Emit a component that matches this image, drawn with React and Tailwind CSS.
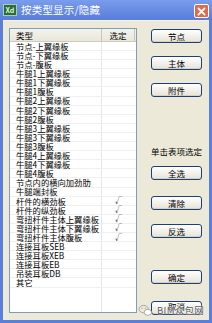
import React from 'react';

const items = [
  { name: '节点-上翼缘板' },
  { name: '节点-下翼缘板' },
  { name: '节点-腹板' },
  { name: '牛腿1上翼缘板' },
  { name: '牛腿1下翼缘板' },
  { name: '牛腿1腹板' },
  { name: '牛腿2上翼缘板' },
  { name: '牛腿2下翼缘板' },
  { name: '牛腿2腹板' },
  { name: '牛腿3上翼缘板' },
  { name: '牛腿3下翼缘板' },
  { name: '牛腿3腹板' },
  { name: '牛腿4上翼缘板' },
  { name: '牛腿4下翼缘板' },
  { name: '牛腿4腹板' },
  { name: '节点内的横向加劲肋' },
  { name: '牛腿端封板' },
  { name: '杆件的横劲板', checked: true },
  { name: '杆件的纵劲板', checked: true },
  { name: '弯扭杆件主体上翼缘板', checked: true },
  { name: '弯扭杆件主体下翼缘板', checked: true },
  { name: '弯扭杆件主体腹板', checked: true },
  { name: '连接耳板SEB' },
  { name: '连接耳板XEB' },
  { name: '连接耳板EB' },
  { name: '吊装耳板DB' },
  { name: '其它' },
];

const font = { fontFamily: '"Noto Sans CJK SC", "Liberation Sans", sans-serif' };

const XpButton = ({ label, className = '', textClass = '' }) => (
  <div
    className={`w-[51px] h-[14px] rounded-[3px] border border-[#1c3f78] bg-gradient-to-b from-white to-[#e6e3d6] shadow-[inset_0_-1px_0_#d8d2bd] flex items-center justify-center text-[8.5px] leading-none text-black ${className}`}
  >
    <span className={textClass}>{label}</span>
  </div>
);

const App = () => {
  return (
    <div className="relative w-[212px] h-[323px] bg-[#5a7edb] flex flex-col overflow-hidden" style={font}>
      {/* Title bar */}
      <div className="h-[20px] flex items-center px-[3px] bg-gradient-to-b from-[#7a9cec] to-[#587ddb]">
        <div className="w-[14px] h-[12px] bg-[#2f6a3a] border border-[#9fd3a8] flex items-center justify-center text-[7px] leading-none font-bold text-[#d8f5d8]">
          Xd
        </div>
        <span className="ml-[4px] text-[10.5px] leading-none text-white tracking-[0.2px]">按类型显示/隐藏</span>
        <div className="ml-auto mt-[2px] w-[15px] h-[14px] rounded-[2px] border border-white bg-[#e2694a] flex items-center justify-center">
          <svg width="9" height="9" viewBox="0 0 9 9">
            <path d="M1.5 1.5 L7.5 7.5 M7.5 1.5 L1.5 7.5" stroke="white" strokeWidth="1.8" strokeLinecap="round" />
          </svg>
        </div>
      </div>

      {/* Body */}
      <div className="flex-1 mx-[3px] mb-[3px] bg-[#ece9d8] border-t border-[#f5f4ee] flex pl-[6px] pt-[7px]">
        {/* List */}
        <div className="w-[128px] h-[285px] border border-[#7f9db9] bg-white flex flex-col">
          <div className="h-[13px] flex bg-gradient-to-b from-[#f4f3ec] to-[#e9e7dc] border-b border-[#d0ccbc] text-[8.5px] leading-none text-black">
            <div className="w-[92px] flex items-center pl-[6px] border-r border-[#c9c5b5]">类型</div>
            <div className="w-[33px] flex items-center justify-center border-r border-[#c9c5b5]">选定</div>
          </div>
          <div className="flex-1 flex flex-col">
            {items.map((it, i) => (
              <div key={i} className="h-[9.1px] flex border-b border-[#f0f0f0] text-[8.3px] leading-none text-black">
                <div className="w-[92px] flex items-center pl-[6px] border-r border-[#e6e6e6] whitespace-nowrap">{it.name}</div>
                <div className="w-[33px] flex items-center justify-center text-[7px]">{it.checked ? '√' : ''}</div>
              </div>
            ))}
            <div className="flex-1 flex">
              <div className="w-[92px] border-r border-[#e6e6e6]" />
            </div>
          </div>
        </div>

        {/* Buttons */}
        <div className="ml-[14px] flex flex-col items-center w-[51px] pt-[1px]">
          <XpButton label="节点" />
          <XpButton label="主体" className="mt-[13px]" />
          <XpButton label="附件" className="mt-[13px]" />
          <div className="mt-[49px] h-[10px] flex items-center text-[8.5px] leading-none whitespace-nowrap text-black">单击表项选定</div>
          <XpButton label="全选" className="mt-[10px]" />
          <XpButton label="清除" className="mt-[16px]" />
          <XpButton label="反选" className="mt-[14px]" />
          <XpButton label="确定" className="mt-[32px]" />
          <XpButton label="取消" className="mt-[17px]" textClass="-mt-[4px]" />
        </div>
      </div>

      {/* Watermark */}
      <div className="absolute left-[138px] top-[304px] flex items-center gap-[4px]">
        <svg width="15" height="13" viewBox="0 0 16 14">
          <ellipse cx="6" cy="5.5" rx="5" ry="4" fill="none" stroke="#9a9a9a" strokeWidth="0.9" />
          <ellipse cx="10.5" cy="9" rx="4" ry="3.2" fill="white" stroke="#9a9a9a" strokeWidth="0.9" />
          <circle cx="4.3" cy="4.5" r="0.6" fill="#9a9a9a" />
          <circle cx="7.7" cy="4.5" r="0.6" fill="#9a9a9a" />
        </svg>
        <span className="text-[9.5px] leading-none text-[#5a5a5a] tracking-[0.3px] [text-shadow:0_0_2px_white,0_0_2px_white]">BIM众包网</span>
      </div>
    </div>
  );
};

export default App;
